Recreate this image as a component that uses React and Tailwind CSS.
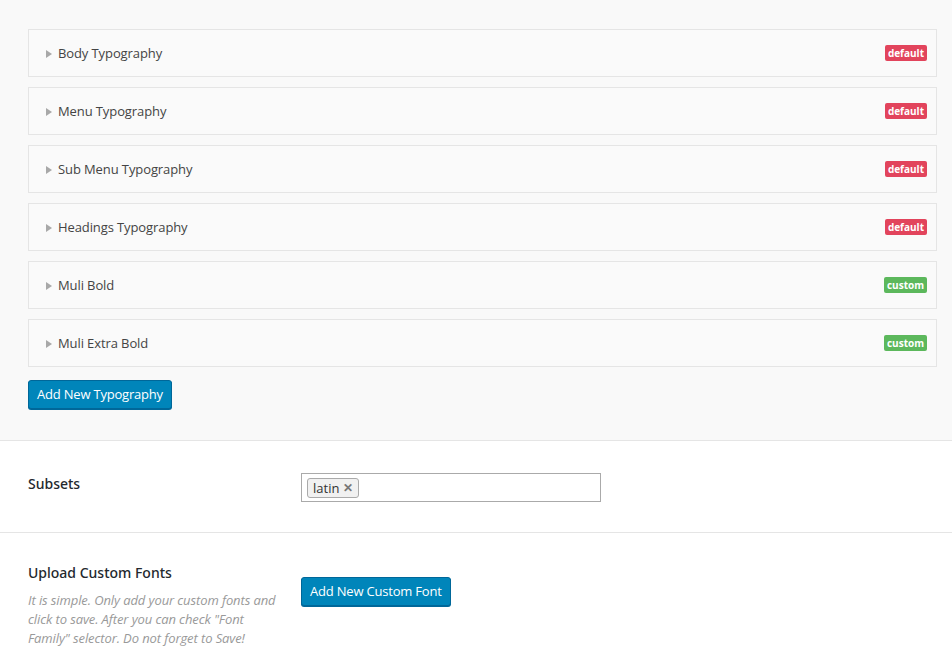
const items = [
  { name: "Body Typography", tag: "default" },
  { name: "Menu Typography", tag: "default" },
  { name: "Sub Menu Typography", tag: "default" },
  { name: "Headings Typography", tag: "default" },
  { name: "Muli Bold", tag: "custom" },
  { name: "Muli Extra Bold", tag: "custom" },
];

function Row({ name, tag }) {
  return (
    <div className="flex h-[48px] items-center justify-between border border-[#e5e5e5] bg-[#fafafa] pl-[17px] pr-[9px]">
      <div className="flex items-center gap-[6px] pt-[1px]">
        <svg width="6" height="8" viewBox="0 0 6 8" className="fill-[#a8a8a8]">
          <path d="M0 0 L6 4 L0 8 Z" />
        </svg>
        <span className="text-[13px] tracking-[-0.1px] text-[#444]">{name}</span>
      </div>
      <span
        className={
          "rounded-[2px] px-[3px] text-[10px] font-bold leading-[16px] text-white " +
          (tag === "default" ? "bg-[#e2445c]" : "bg-[#5cb85c]")
        }
      >
        {tag}
      </span>
    </div>
  );
}

export default function App() {
  return (
    <div className="min-h-[669px] bg-white font-['Open_Sans',sans-serif] text-[#23282d]">
      {/* typography list */}
      <div className="border-b border-[#e5e5e5] bg-[#f9f9f9] px-[28px] pb-[31px] pt-[29px] pr-[15px]">
        <div className="flex flex-col gap-[10px]">
          {items.map((it) => (
            <Row key={it.name} {...it} />
          ))}
        </div>
        <button className="mt-[13px] h-[29px] rounded-[3px] border border-[#006799] bg-[#0085ba] px-[8px] text-[13px] tracking-[-0.2px] text-white shadow-[0_1px_0_#006799]">
          Add New Typography
        </button>
      </div>

      {/* subsets */}
      <div className="flex border-b border-[#e5e5e5] px-[28px] pb-[30px] pt-[32px]">
        <div className="w-[273px] font-['Noto_Sans',sans-serif] text-[14px] font-medium text-[#23282d]">Subsets</div>
        <div className="flex h-[29px] w-[300px] items-center border border-[#aaa] bg-white px-[5px]">
          <span className="flex items-center gap-[4px] rounded-[3px] border border-[#aaa] bg-[#f1f1f1] px-[5px] text-[13px] leading-[18px] text-[#333]">
            latin
            <span className="text-[12px] font-bold text-[#777]">✕</span>
          </span>
        </div>
      </div>

      {/* upload custom fonts */}
      <div className="flex px-[28px] pt-[29px]">
        <div className="w-[273px]">
          <div className="font-['Noto_Sans',sans-serif] text-[14px] font-medium text-[#23282d]">Upload Custom Fonts</div>
          <p className="mt-[8px] w-[252px] text-[13px] italic leading-[19px] tracking-[-0.1px] text-[#999]">
            It is simple. Only add your custom fonts and click to save. After you can check "Font Family" selector. Do not forget to Save!
          </p>
        </div>
        <div className="pt-[15px]">
          <button className="h-[29px] rounded-[3px] border border-[#006799] bg-[#0085ba] px-[8px] text-[13px] tracking-[-0.2px] text-white shadow-[0_1px_0_#006799]">
            Add New Custom Font
          </button>
        </div>
      </div>
    </div>
  );
}
